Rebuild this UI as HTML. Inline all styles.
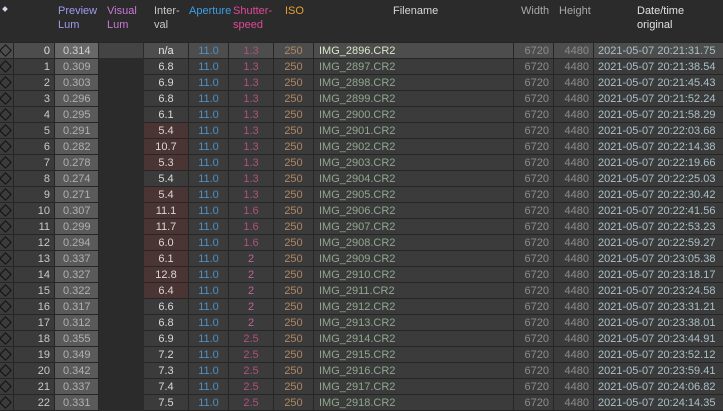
<!DOCTYPE html>
<html><head><meta charset="utf-8"><style>
html,body{margin:0;padding:0;background:#2b2b2b;width:723px;height:408px;overflow:hidden;font-family:"Liberation Sans",sans-serif;font-size:11px}
.hdr{position:absolute;left:0;top:0;width:723px;height:42px;background:#2b2b2b}
.h{position:absolute;top:4px;line-height:14px;font-size:11px}
table{position:absolute;left:0;top:42px;border-collapse:separate;border-spacing:0;table-layout:fixed;width:723px}
td{height:14px;padding:1px 4px 0 4px;border-right:1px solid #262626;border-bottom:1px solid #262626;background:#3b3b3b;white-space:nowrap;overflow:hidden;line-height:14px;text-align:right;color:#a8a8a8}
tr:first-child td{border-top:1px solid #262626}
td.d{padding:0;height:15px;background:#3b3b3b;position:relative}
td.d:after{content:"";position:absolute;left:1px;top:3px;width:7px;height:7px;border:1px solid #111;transform:rotate(45deg)}
td.i{color:#c8c8c8}
td.p{background:#5a5a5a;color:#b0b0b0;text-align:left;padding-left:8px}
td.v{background:#2b2b2b;border-right:1px solid #2b2b2b;border-bottom:1px solid #2b2b2b}
td.iv{text-align:center;color:#d8d8d8}
td.r{background:#4a3434}
td.a{text-align:center;color:#4f8fc0}
td.s{text-align:center;color:#b05080}
td.s2{color:#c060a0}
td.o{text-align:center;color:#b08860}
td.f{text-align:left;color:#8fa88f;padding-left:5px}
td.w{color:#8c8c8c}
td.t{text-align:left;color:#a8c0c8;padding-left:4px;border-right:none}
tr.sel td{background:#4d4d4d}
tr.sel td.p{background:#686868;color:#d0d0d0}
tr.sel td.v{background:#444}
tr.sel td.f{color:#d8e8c8}
tr.sel td.iv{color:#e8e8e8}
tr.sel td.i{color:#e0e0e0}
</style></head><body>
<div class="hdr">
<div style="position:absolute;left:3px;top:7px;width:4px;height:4px;background:#cfd8e8;transform:rotate(45deg)"></div>
<div class="h" style="left:58px;color:#9c9cf0">Preview<br>Lum</div>
<div class="h" style="left:107px;color:#c878d8">Visual<br>Lum</div>
<div class="h" style="left:154px;color:#c8c8c8">Inter-<br>val</div>
<div class="h" style="left:189px;color:#3c9ee8">Aperture</div>
<div class="h" style="left:233px;color:#e04898">Shutter-<br>speed</div>
<div class="h" style="left:285px;color:#e8a030">ISO</div>
<div class="h" style="left:393px;color:#d8d8d8">Filename</div>
<div class="h" style="left:521px;color:#a8a8a8">Width</div>
<div class="h" style="left:559px;color:#a8a8a8">Height</div>
<div class="h" style="left:637px;color:#e0e0e0">Date/time<br>original</div>
</div>
<table>
<colgroup><col style="width:14px"><col style="width:41px"><col style="width:44px"><col style="width:45px"><col style="width:45px"><col style="width:40px"><col style="width:45px"><col style="width:40px"><col style="width:200px"><col style="width:40px"><col style="width:40px"><col style="width:129px"></colgroup>
<tr class="sel"><td class="d"></td><td class="i">0</td><td class="p">0.314</td><td class="v"></td><td class="iv">n/a</td><td class="a">11.0</td><td class="s">1.3</td><td class="o">250</td><td class="f">IMG_2896.CR2</td><td class="w">6720</td><td class="w">4480</td><td class="t">2021-05-07 20:21:31.75</td></tr>
<tr><td class="d"></td><td class="i">1</td><td class="p">0.309</td><td class="v"></td><td class="iv">6.8</td><td class="a">11.0</td><td class="s">1.3</td><td class="o">250</td><td class="f">IMG_2897.CR2</td><td class="w">6720</td><td class="w">4480</td><td class="t">2021-05-07 20:21:38.54</td></tr>
<tr><td class="d"></td><td class="i">2</td><td class="p">0.303</td><td class="v"></td><td class="iv">6.9</td><td class="a">11.0</td><td class="s">1.3</td><td class="o">250</td><td class="f">IMG_2898.CR2</td><td class="w">6720</td><td class="w">4480</td><td class="t">2021-05-07 20:21:45.43</td></tr>
<tr><td class="d"></td><td class="i">3</td><td class="p">0.296</td><td class="v"></td><td class="iv">6.8</td><td class="a">11.0</td><td class="s">1.3</td><td class="o">250</td><td class="f">IMG_2899.CR2</td><td class="w">6720</td><td class="w">4480</td><td class="t">2021-05-07 20:21:52.24</td></tr>
<tr><td class="d"></td><td class="i">4</td><td class="p">0.295</td><td class="v"></td><td class="iv">6.1</td><td class="a">11.0</td><td class="s">1.3</td><td class="o">250</td><td class="f">IMG_2900.CR2</td><td class="w">6720</td><td class="w">4480</td><td class="t">2021-05-07 20:21:58.29</td></tr>
<tr><td class="d"></td><td class="i">5</td><td class="p">0.291</td><td class="v"></td><td class="iv r">5.4</td><td class="a">11.0</td><td class="s">1.3</td><td class="o">250</td><td class="f">IMG_2901.CR2</td><td class="w">6720</td><td class="w">4480</td><td class="t">2021-05-07 20:22:03.68</td></tr>
<tr><td class="d"></td><td class="i">6</td><td class="p">0.282</td><td class="v"></td><td class="iv r">10.7</td><td class="a">11.0</td><td class="s">1.3</td><td class="o">250</td><td class="f">IMG_2902.CR2</td><td class="w">6720</td><td class="w">4480</td><td class="t">2021-05-07 20:22:14.38</td></tr>
<tr><td class="d"></td><td class="i">7</td><td class="p">0.278</td><td class="v"></td><td class="iv r">5.3</td><td class="a">11.0</td><td class="s">1.3</td><td class="o">250</td><td class="f">IMG_2903.CR2</td><td class="w">6720</td><td class="w">4480</td><td class="t">2021-05-07 20:22:19.66</td></tr>
<tr><td class="d"></td><td class="i">8</td><td class="p">0.274</td><td class="v"></td><td class="iv">5.4</td><td class="a">11.0</td><td class="s">1.3</td><td class="o">250</td><td class="f">IMG_2904.CR2</td><td class="w">6720</td><td class="w">4480</td><td class="t">2021-05-07 20:22:25.03</td></tr>
<tr><td class="d"></td><td class="i">9</td><td class="p">0.271</td><td class="v"></td><td class="iv r">5.4</td><td class="a">11.0</td><td class="s">1.3</td><td class="o">250</td><td class="f">IMG_2905.CR2</td><td class="w">6720</td><td class="w">4480</td><td class="t">2021-05-07 20:22:30.42</td></tr>
<tr><td class="d"></td><td class="i">10</td><td class="p">0.307</td><td class="v"></td><td class="iv r">11.1</td><td class="a">11.0</td><td class="s">1.6</td><td class="o">250</td><td class="f">IMG_2906.CR2</td><td class="w">6720</td><td class="w">4480</td><td class="t">2021-05-07 20:22:41.56</td></tr>
<tr><td class="d"></td><td class="i">11</td><td class="p">0.299</td><td class="v"></td><td class="iv r">11.7</td><td class="a">11.0</td><td class="s">1.6</td><td class="o">250</td><td class="f">IMG_2907.CR2</td><td class="w">6720</td><td class="w">4480</td><td class="t">2021-05-07 20:22:53.23</td></tr>
<tr><td class="d"></td><td class="i">12</td><td class="p">0.294</td><td class="v"></td><td class="iv r">6.0</td><td class="a">11.0</td><td class="s">1.6</td><td class="o">250</td><td class="f">IMG_2908.CR2</td><td class="w">6720</td><td class="w">4480</td><td class="t">2021-05-07 20:22:59.27</td></tr>
<tr><td class="d"></td><td class="i">13</td><td class="p">0.337</td><td class="v"></td><td class="iv r">6.1</td><td class="a">11.0</td><td class="s s2">2</td><td class="o">250</td><td class="f">IMG_2909.CR2</td><td class="w">6720</td><td class="w">4480</td><td class="t">2021-05-07 20:23:05.38</td></tr>
<tr><td class="d"></td><td class="i">14</td><td class="p">0.327</td><td class="v"></td><td class="iv r">12.8</td><td class="a">11.0</td><td class="s s2">2</td><td class="o">250</td><td class="f">IMG_2910.CR2</td><td class="w">6720</td><td class="w">4480</td><td class="t">2021-05-07 20:23:18.17</td></tr>
<tr><td class="d"></td><td class="i">15</td><td class="p">0.322</td><td class="v"></td><td class="iv r">6.4</td><td class="a">11.0</td><td class="s s2">2</td><td class="o">250</td><td class="f">IMG_2911.CR2</td><td class="w">6720</td><td class="w">4480</td><td class="t">2021-05-07 20:23:24.58</td></tr>
<tr><td class="d"></td><td class="i">16</td><td class="p">0.317</td><td class="v"></td><td class="iv">6.6</td><td class="a">11.0</td><td class="s s2">2</td><td class="o">250</td><td class="f">IMG_2912.CR2</td><td class="w">6720</td><td class="w">4480</td><td class="t">2021-05-07 20:23:31.21</td></tr>
<tr><td class="d"></td><td class="i">17</td><td class="p">0.312</td><td class="v"></td><td class="iv">6.8</td><td class="a">11.0</td><td class="s s2">2</td><td class="o">250</td><td class="f">IMG_2913.CR2</td><td class="w">6720</td><td class="w">4480</td><td class="t">2021-05-07 20:23:38.01</td></tr>
<tr><td class="d"></td><td class="i">18</td><td class="p">0.355</td><td class="v"></td><td class="iv">6.9</td><td class="a">11.0</td><td class="s">2.5</td><td class="o">250</td><td class="f">IMG_2914.CR2</td><td class="w">6720</td><td class="w">4480</td><td class="t">2021-05-07 20:23:44.91</td></tr>
<tr><td class="d"></td><td class="i">19</td><td class="p">0.349</td><td class="v"></td><td class="iv">7.2</td><td class="a">11.0</td><td class="s">2.5</td><td class="o">250</td><td class="f">IMG_2915.CR2</td><td class="w">6720</td><td class="w">4480</td><td class="t">2021-05-07 20:23:52.12</td></tr>
<tr><td class="d"></td><td class="i">20</td><td class="p">0.342</td><td class="v"></td><td class="iv">7.3</td><td class="a">11.0</td><td class="s">2.5</td><td class="o">250</td><td class="f">IMG_2916.CR2</td><td class="w">6720</td><td class="w">4480</td><td class="t">2021-05-07 20:23:59.41</td></tr>
<tr><td class="d"></td><td class="i">21</td><td class="p">0.337</td><td class="v"></td><td class="iv">7.4</td><td class="a">11.0</td><td class="s">2.5</td><td class="o">250</td><td class="f">IMG_2917.CR2</td><td class="w">6720</td><td class="w">4480</td><td class="t">2021-05-07 20:24:06.82</td></tr>
<tr><td class="d"></td><td class="i">22</td><td class="p">0.331</td><td class="v"></td><td class="iv">7.5</td><td class="a">11.0</td><td class="s">2.5</td><td class="o">250</td><td class="f">IMG_2918.CR2</td><td class="w">6720</td><td class="w">4480</td><td class="t">2021-05-07 20:24:14.35</td></tr>
</table>
</body></html>
